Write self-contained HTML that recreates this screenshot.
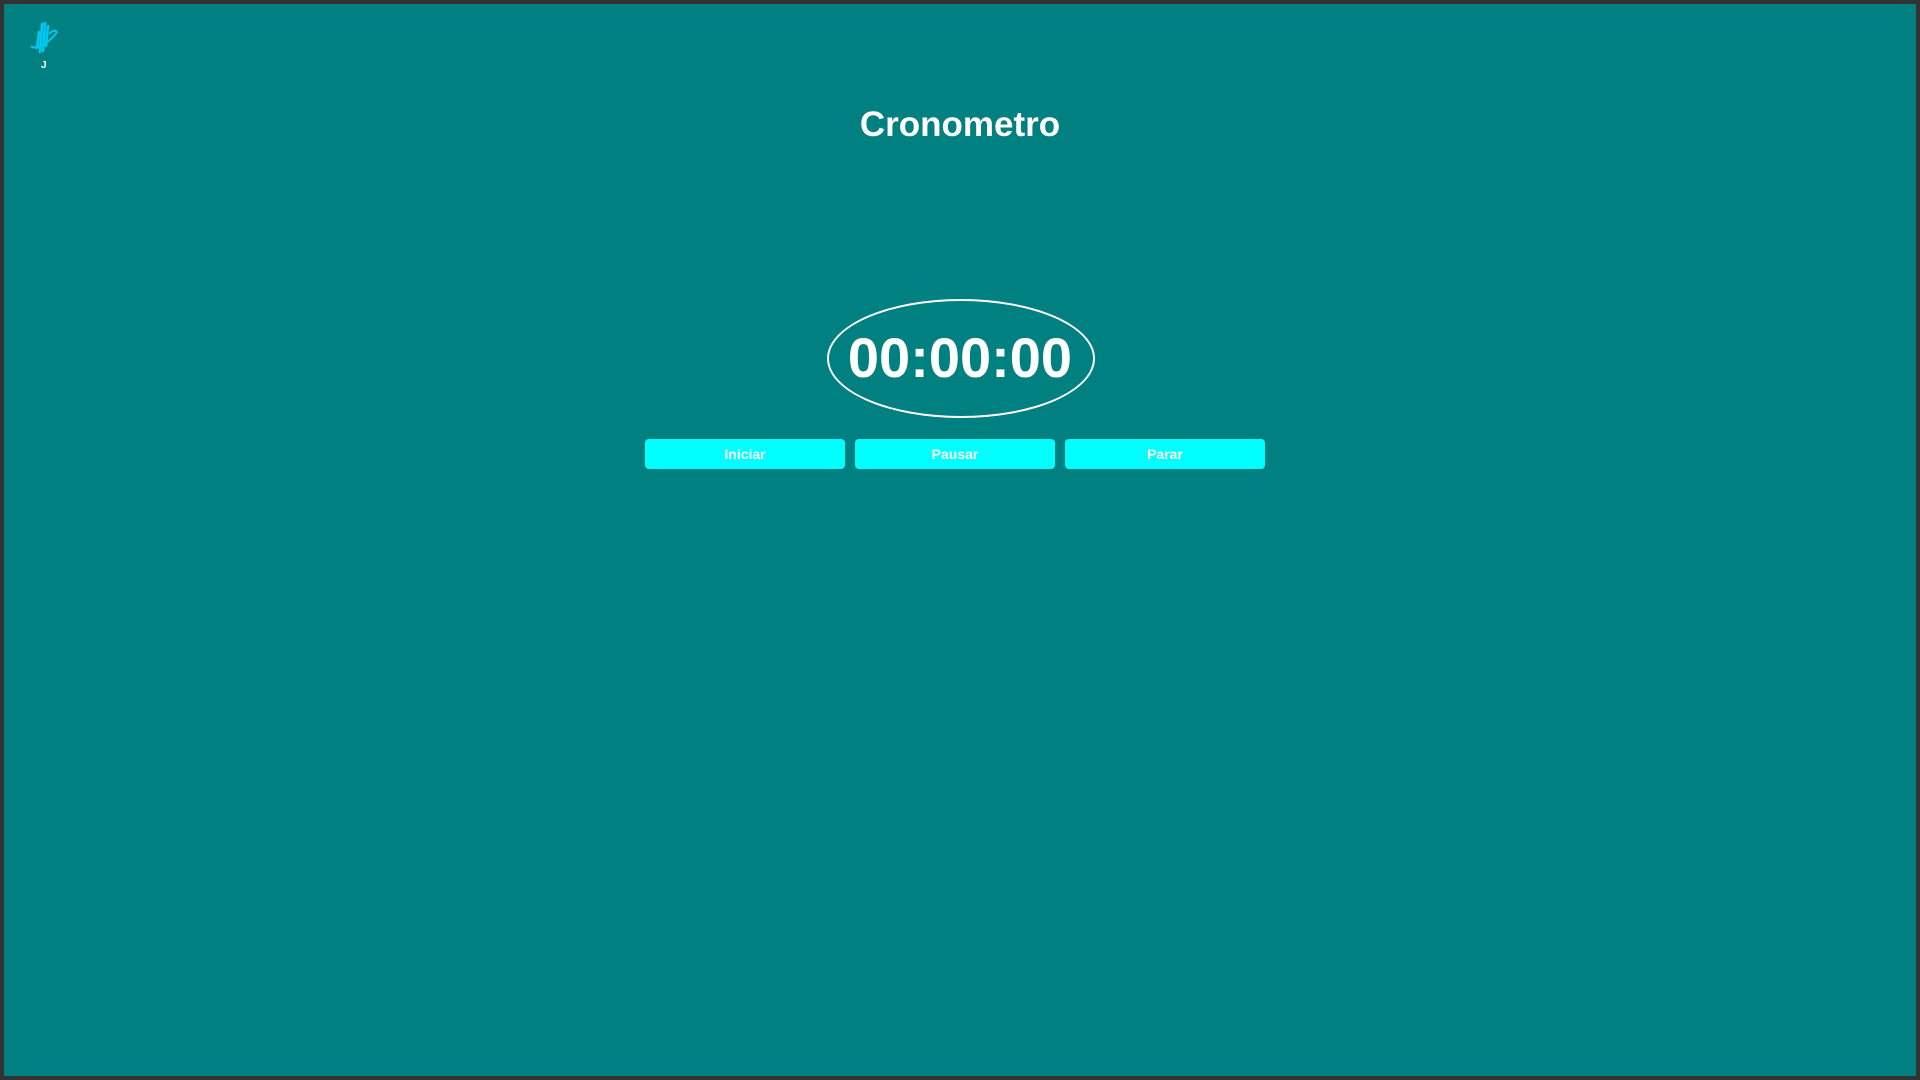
<!DOCTYPE html>
<html><head><meta charset="utf-8"><style>
html,body{margin:0;padding:0;width:1920px;height:1080px;overflow:hidden;background:#333;}
.page{position:absolute;left:4px;top:4px;width:1912px;height:1072px;background:#008080;font-family:"Liberation Sans",sans-serif;color:#fff;}
h1{position:absolute;left:0;width:100%;top:101px;margin:0;text-align:center;font-size:35px;font-weight:bold;}
.oval{position:absolute;left:823px;top:295px;width:264px;height:115px;border:2px solid #fff;border-radius:50%;}
.time{position:absolute;left:0;width:1912px;top:319px;text-align:center;font-size:56px;font-weight:bold;line-height:70px;}
.btn{position:absolute;top:435px;width:200px;height:30px;background:#00ffff;border-radius:4px;text-align:center;line-height:30px;font-size:14px;font-weight:bold;color:#fff;}
.j{position:absolute;left:37px;top:56px;font-size:10px;font-weight:bold;}
</style></head><body><div class="page">
<svg style="position:absolute;left:23px;top:16px" width="34" height="40" viewBox="0 0 34 40">
<g stroke="#00c8f0" stroke-width="2.6" stroke-linecap="round">
<line x1="12" y1="12" x2="10" y2="28"/><line x1="15" y1="4" x2="13" y2="32"/><line x1="18" y1="3" x2="16" y2="31"/><line x1="21" y1="6" x2="19" y2="26"/>
</g>
<path d="M4 26 C6 29 13 27 20 22 C27 17 31 12 29 11 C27 10 24 12 22 14" fill="none" stroke="#00c8f0" stroke-width="2"/>
</svg>
<div class="j">J</div>
<h1>Cronometro</h1>
<div class="oval"></div>
<div class="time">00:00:00</div>
<div class="btn" style="left:641px">Iniciar</div>
<div class="btn" style="left:851px">Pausar</div>
<div class="btn" style="left:1061px">Parar</div>
</div></body></html>
